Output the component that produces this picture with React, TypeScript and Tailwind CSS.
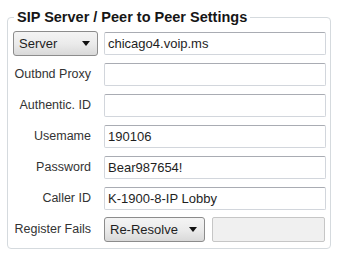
import React from 'react';

const font = { fontFamily: '"Liberation Sans", Arial, sans-serif' };

function Combo({ value, width }: { value: string; width: string }) {
  return (
    <div
      className={`${width} h-[25px] shrink-0 flex items-center justify-between pl-[5px] pr-[7px] rounded-[3px] border border-[#8c8c8c] bg-gradient-to-b from-[#f4f4f4] via-[#ebebeb] to-[#d9d9d9] text-[13px] text-[#1e1e1e]`}
    >
      <span>{value}</span>
      <svg width="8" height="5" viewBox="0 0 8 5">
        <path d="M0 0 H8 L4 5 Z" fill="#111" />
      </svg>
    </div>
  );
}

function TextBox({ value = '' }: { value?: string }) {
  return (
    <div className="h-[23px] flex-1 flex items-center pl-[3px] rounded-[2px] border border-[#d2d6dc] border-t-[#a9acb3] bg-white text-[13px] text-[#1e1e1e]">
      {value}
    </div>
  );
}

export default function App() {
  const rows = [
    { label: 'Outbnd Proxy', value: '' },
    { label: 'Authentic. ID', value: '' },
    { label: 'Usemame', value: '190106' },
    { label: 'Password', value: 'Bear987654!' },
    { label: 'Caller ID', value: 'K-1900-8-IP Lobby' },
  ];

  return (
    <div className="w-[337px] h-[255px] bg-white pt-[8px] pl-[7px]" style={font}>
      <fieldset className="w-[324px] h-[241px] border border-[#d5dade] rounded-[4px] px-[5px] pr-[4px] pt-[6px]">
        <legend className="ml-[1px] px-[3px] text-[14.5px] leading-[18px] font-bold text-[#161616]">
          SIP Server / Peer to Peer Settings
        </legend>

        <div className="flex flex-col gap-[8px]">
          <div className="h-[23px] flex items-center">
            <Combo value="Server" width="w-[85px]" />
            <div className="w-[6px] shrink-0" />
            <TextBox value="chicago4.voip.ms" />
          </div>

          {rows.map((r) => (
            <div key={r.label} className="h-[23px] flex items-center">
              <div className="w-[85px] shrink-0 pr-[7px] text-right text-[12.5px] text-[#333]">
                {r.label}
              </div>
              <div className="w-[6px] shrink-0" />
              <TextBox value={r.value} />
            </div>
          ))}

          <div className="h-[23px] flex items-center">
            <div className="w-[85px] shrink-0 pr-[7px] text-right text-[12.5px] text-[#333]">
              Register Fails
            </div>
            <div className="w-[6px] shrink-0" />
            <Combo value="Re-Resolve" width="w-[101px]" />
            <div className="ml-[7px] mr-[1px] h-[25px] flex-1 rounded-[2px] border border-[#c6c6c6] bg-[#f0f0f0]" />
          </div>
        </div>
      </fieldset>
    </div>
  );
}
